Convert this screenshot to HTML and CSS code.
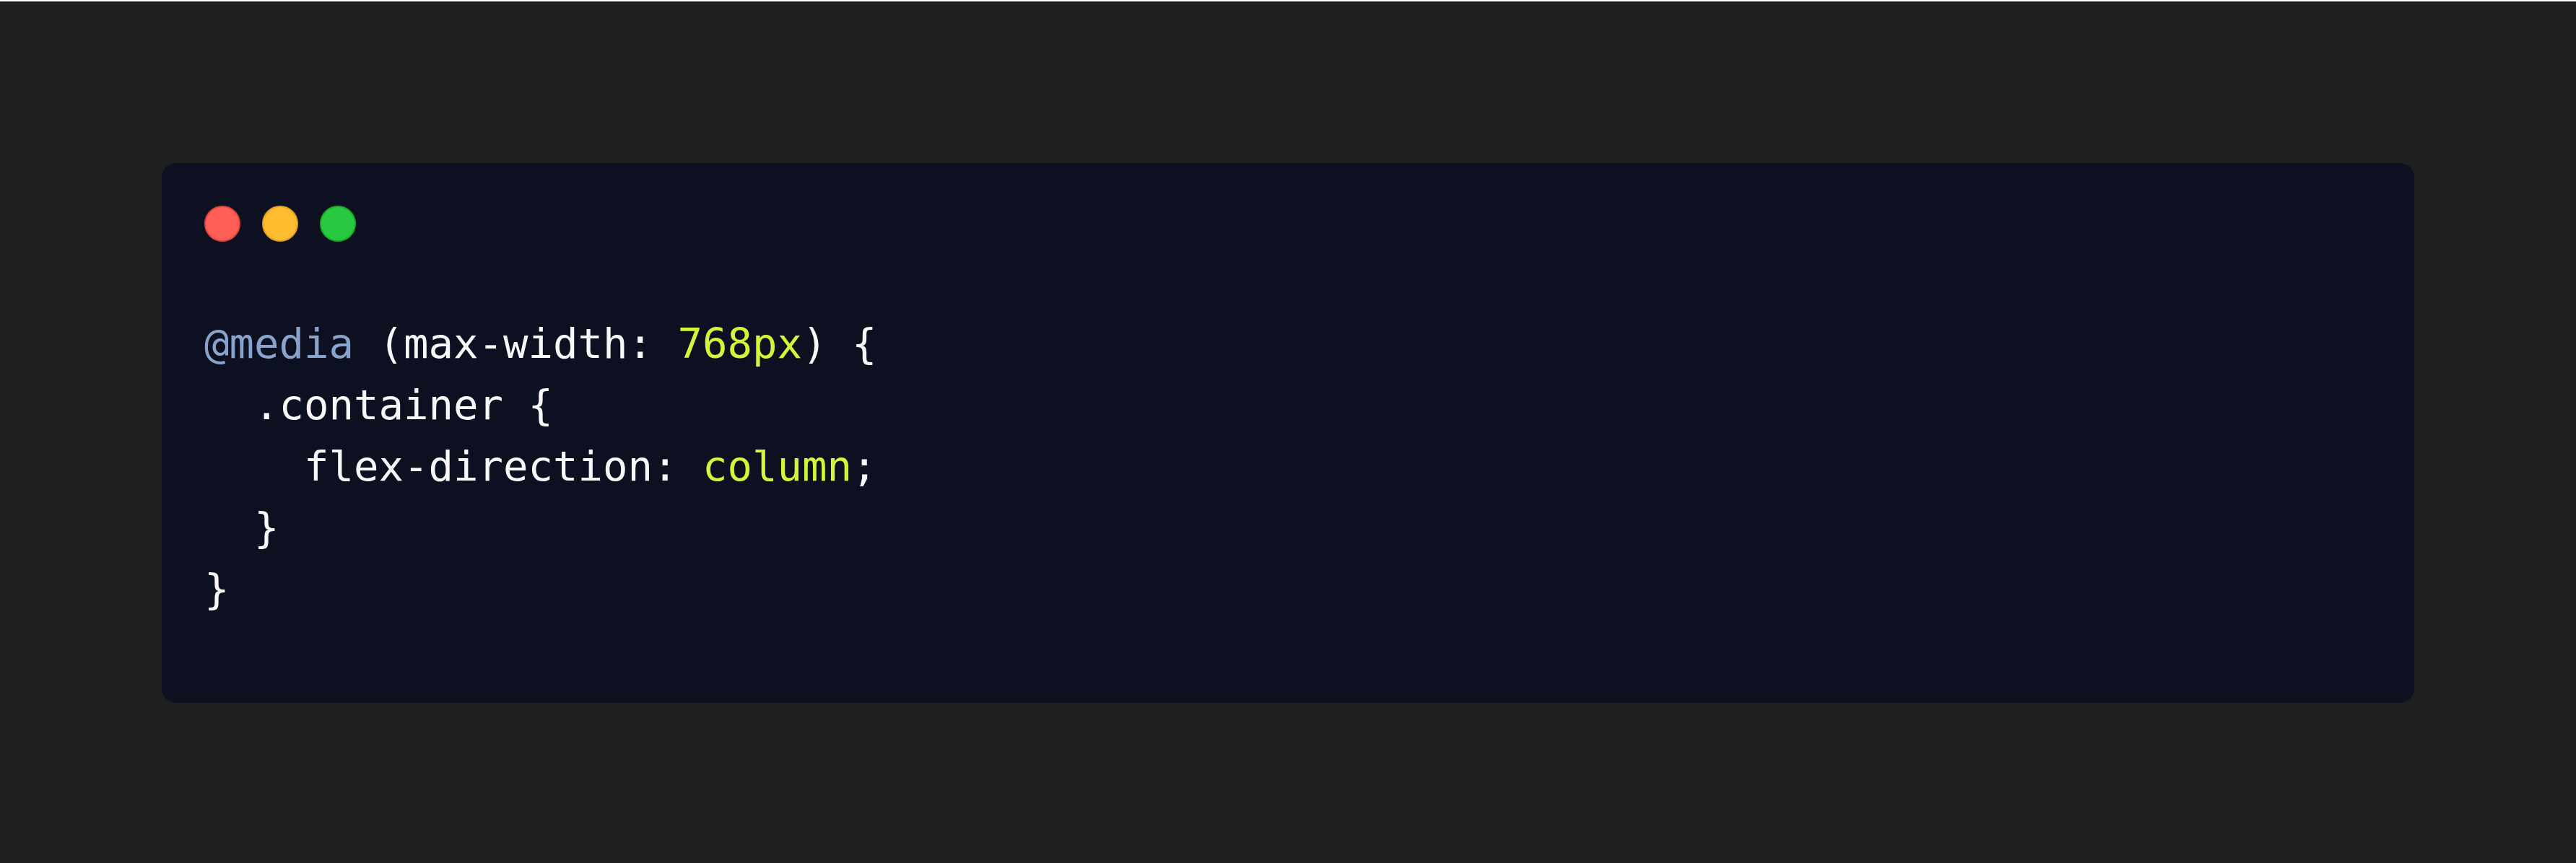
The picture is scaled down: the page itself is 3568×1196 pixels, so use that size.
FILE: index.html
```html
<!DOCTYPE html>
<html lang="en">
<head>
<meta charset="utf-8">
<title>Code snippet</title>
<link rel="stylesheet" href="styles.css">
</head>
<body>
<div class="topline"></div>
<main class="stage">
  <section class="window">
    <div class="controls">
      <span class="dot dot-red"></span>
      <span class="dot dot-yellow"></span>
      <span class="dot dot-green"></span>
    </div>
    <pre class="code"><span class="kw">@media</span> (max-width: <span class="val">768px</span>) {
  .container {
    flex-direction: <span class="val">column</span>;
  }
}</pre>
  </section>
</main>
</body>
</html>
```

FILE: styles.css
```css
html, body {
  margin: 0;
  padding: 0;
}

body {
  background: #1f1f1f;
  min-height: 100vh;
  display: flex;
  flex-direction: column;
}

.topline {
  height: 2px;
  background: #ffffff;
  flex: none;
}

.stage {
  flex: 1;
  display: flex;
  align-items: center;
  justify-content: center;
  padding: 2px 224px 0 224px;
}

.window {
  width: 100%;
  box-sizing: border-box;
  background: #0c1021;
  border-radius: 20px;
  padding: 59px 60px 115px 59px;
}

.controls {
  display: flex;
  gap: 30px;
  height: 50px;
}

.dot {
  width: 50px;
  height: 50px;
  border-radius: 50%;
  box-sizing: border-box;
  border: 2px solid transparent;
}

.dot-red {
  background: #ff5f57;
  border-color: #e0443e;
}

.dot-yellow {
  background: #febc2e;
  border-color: #dea123;
}

.dot-green {
  background: #28c840;
  border-color: #1aab29;
}

.code {
  margin: 99px 0 0 0;
  font-family: "DejaVu Sans Mono", "Liberation Mono", monospace;
  font-size: 57.3px;
  line-height: 85px;
  color: #f8f8f8;
  white-space: pre;
}

.kw {
  color: #89a3cc;
}

.val {
  color: #d6f53a;
}
```
